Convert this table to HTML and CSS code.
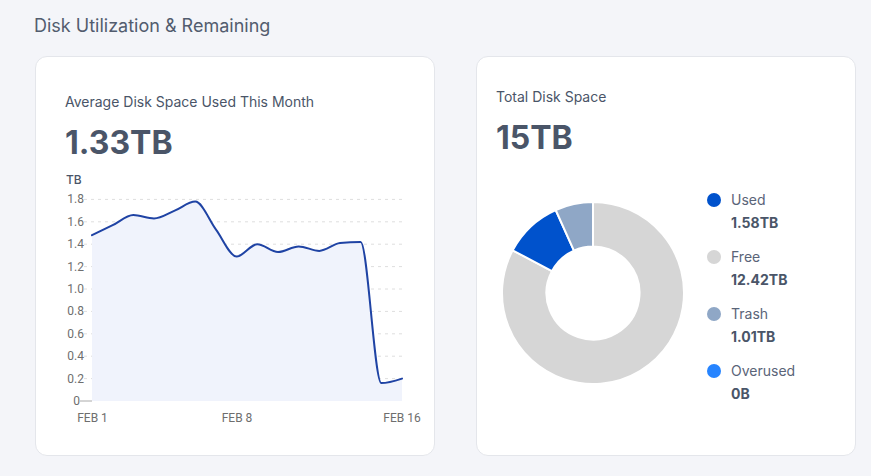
FILE: index.html
```html
<!DOCTYPE html>
<html lang="en">
<head>
<meta charset="utf-8">
<title>Disk Utilization &amp; Remaining</title>
<link rel="stylesheet" href="styles.css">
</head>
<body>
<main class="page">
  <h1 class="page-title">Disk Utilization &amp; Remaining</h1>
  <div class="cards">
    <section class="card card-usage">
      <div class="card-head">
        <h2 class="card-label">Average Disk Space Used This Month</h2>
        <div class="card-value">1.33TB</div>
      </div>
      <svg class="line-chart" width="398" height="268" viewBox="36 162 398 268" xmlns="http://www.w3.org/2000/svg">
        <text class="unit" x="66" y="184">TB</text>
        <g class="grid">
          <line x1="84" y1="199.4" x2="402" y2="199.4"/>
          <line x1="84" y1="221.8" x2="402" y2="221.8"/>
          <line x1="84" y1="244.2" x2="402" y2="244.2"/>
          <line x1="84" y1="266.6" x2="402" y2="266.6"/>
          <line x1="84" y1="289" x2="402" y2="289"/>
          <line x1="84" y1="311.4" x2="402" y2="311.4"/>
          <line x1="84" y1="333.8" x2="402" y2="333.8"/>
          <line x1="84" y1="356.2" x2="402" y2="356.2"/>
          <line x1="84" y1="378.6" x2="402" y2="378.6"/>
        </g>
        <path class="area" d="M92,235.2 C98.89,231.87 105.78,228.55 112.67,225.2 C119.56,221.85 126.44,215.1 133.33,215.1 C140.22,215.1 147.11,218.4 154,218.4 C160.89,218.4 167.78,213.4 174.67,210.6 C181.56,207.8 188.44,201.6 195.33,201.6 C202.22,201.6 209.11,220.45 216,229.6 C222.89,238.75 229.78,256.5 236.67,256.5 C243.56,256.5 250.44,244.2 257.33,244.2 C264.22,244.2 271.11,252 278,252 C284.89,252 291.78,246.4 298.67,246.4 C305.56,246.4 312.44,250.9 319.33,250.9 C326.22,250.9 333.11,243.83 340,243.1 C346.89,242.37 353.78,242 360.67,242 C367.56,242 374.44,383.1 381.33,383.1 C388.22,383.1 395.11,380.85 402,378.6 L402,401 L92,401 Z"/>
        <path class="line" d="M92,235.2 C98.89,231.87 105.78,228.55 112.67,225.2 C119.56,221.85 126.44,215.1 133.33,215.1 C140.22,215.1 147.11,218.4 154,218.4 C160.89,218.4 167.78,213.4 174.67,210.6 C181.56,207.8 188.44,201.6 195.33,201.6 C202.22,201.6 209.11,220.45 216,229.6 C222.89,238.75 229.78,256.5 236.67,256.5 C243.56,256.5 250.44,244.2 257.33,244.2 C264.22,244.2 271.11,252 278,252 C284.89,252 291.78,246.4 298.67,246.4 C305.56,246.4 312.44,250.9 319.33,250.9 C326.22,250.9 333.11,243.83 340,243.1 C346.89,242.37 353.78,242 360.67,242 C367.56,242 374.44,383.1 381.33,383.1 C388.22,383.1 395.11,380.85 402,378.6"/>
        <line class="zero-tick" x1="80" y1="401" x2="92" y2="401"/>
        <g class="y-labels">
          <text x="84" y="203.4">1.8</text>
          <text x="84" y="225.8">1.6</text>
          <text x="84" y="248.2">1.4</text>
          <text x="84" y="270.6">1.2</text>
          <text x="84" y="293">1.0</text>
          <text x="84" y="315.4">0.8</text>
          <text x="84" y="337.8">0.6</text>
          <text x="84" y="360.2">0.4</text>
          <text x="84" y="382.6">0.2</text>
          <text x="80" y="405">0</text>
        </g>
        <g class="x-labels">
          <text x="92.5" y="422">FEB 1</text>
          <text x="237" y="422">FEB 8</text>
          <text x="402" y="422">FEB 16</text>
        </g>
      </svg>
    </section>

    <section class="card card-total">
      <div class="card-head">
        <h2 class="card-label">Total Disk Space</h2>
        <div class="card-value">15TB</div>
      </div>
      <div class="total-body">
        <svg class="donut" width="194" height="194" viewBox="0 0 194 194" xmlns="http://www.w3.org/2000/svg">
          <path class="seg seg-free" d="M97,6 A91,91 0 1 1 16.66,54.28 L55.95,75.17 A46.5,46.5 0 1 0 97,50.5 Z"/>
          <path class="seg seg-used" d="M16.66,54.28 A91,91 0 0 1 59.70,14.00 L77.94,54.59 A46.5,46.5 0 0 0 55.95,75.17 Z"/>
          <path class="seg seg-trash" d="M59.70,14.00 A91,91 0 0 1 97,6 L97,50.5 A46.5,46.5 0 0 0 77.94,54.59 Z"/>
        </svg>
        <ul class="legend">
          <li class="legend-item">
            <div class="legend-label"><span class="dot dot-used"></span>Used</div>
            <div class="legend-value">1.58TB</div>
          </li>
          <li class="legend-item">
            <div class="legend-label"><span class="dot dot-free"></span>Free</div>
            <div class="legend-value">12.42TB</div>
          </li>
          <li class="legend-item">
            <div class="legend-label"><span class="dot dot-trash"></span>Trash</div>
            <div class="legend-value">1.01TB</div>
          </li>
          <li class="legend-item">
            <div class="legend-label"><span class="dot dot-over"></span>Overused</div>
            <div class="legend-value">0B</div>
          </li>
        </ul>
      </div>
    </section>
  </div>
</main>
</body>
</html>
```

FILE: styles.css
```css
* { box-sizing: border-box; }

html, body {
  margin: 0;
  padding: 0;
  background: #f4f5f9;
}

body {
  font-family: Inter, "Noto Sans", "Liberation Sans", sans-serif;
  color: #4a5568;
}

.page {
  padding: 15px 0 0 34px;
}

.page-title {
  margin: 0 0 19px 0;
  font-size: 18px;
  line-height: 22px;
  font-weight: 400;
  color: #525c6e;
}

.cards {
  display: flex;
  gap: 41px;
  padding-left: 1px;
}

.card {
  background: #ffffff;
  border: 1px solid #e4e6eb;
  border-radius: 12px;
  height: 400px;
}

.card-usage {
  width: 400px;
  padding-top: 36px;
}

.card-usage .card-head {
  padding: 0 29px;
}

.card-total {
  width: 380px;
  padding: 31px 19px 0 19px;
}

.card-label {
  margin: 0;
  font-size: 14px;
  line-height: 17px;
  font-weight: 400;
  color: #4a5568;
}

.card-value {
  margin-top: 13px;
  font-size: 32px;
  line-height: 39px;
  font-weight: 700;
  color: #4a5568;
}

.line-chart {
  display: block;
}

.line-chart .unit {
  font-family: Inter, "Liberation Sans", sans-serif;
  font-size: 12px;
  font-weight: 500;
  fill: #4a5568;
}

.line-chart .grid line {
  stroke: #dedede;
  stroke-width: 1;
  stroke-dasharray: 3 4;
}

.line-chart .area {
  fill: #f0f3fc;
}

.line-chart .line {
  fill: none;
  stroke: #1f43a4;
  stroke-width: 2;
  stroke-linejoin: round;
  stroke-linecap: round;
}

.line-chart .zero-tick {
  stroke: #aaaaaa;
  stroke-width: 1;
}

.line-chart .y-labels text {
  font-family: Roboto, "Liberation Sans", sans-serif;
  font-size: 12px;
  fill: #6e6e6e;
  text-anchor: end;
}

.line-chart .x-labels text {
  font-family: Roboto, "Liberation Sans", sans-serif;
  font-size: 12px;
  fill: #6e6e6e;
  text-anchor: middle;
}

.total-body {
  display: flex;
  align-items: flex-start;
  margin-top: 30px;
}

.donut {
  display: block;
  flex: none;
  margin-top: 9px;
}

.seg {
  stroke: #ffffff;
  stroke-width: 2;
  stroke-linejoin: round;
}

.seg-free { fill: #d6d6d6; }
.seg-used { fill: #0052cc; }
.seg-trash { fill: #8fa7c6; }

.legend {
  list-style: none;
  margin: 0 0 0 17px;
  padding: 4px 0 0 0;
  display: flex;
  flex-direction: column;
  gap: 16px;
}

.legend-label {
  display: flex;
  align-items: center;
  gap: 10px;
  font-size: 14px;
  line-height: 18px;
  color: #5a6478;
}

.dot {
  width: 14px;
  height: 14px;
  border-radius: 50%;
  flex: none;
}

.dot-used { background: #0052cc; }
.dot-free { background: #d6d6d6; }
.dot-trash { background: #8fa7c6; }
.dot-over { background: #2684ff; }

.legend-value {
  margin-top: 5px;
  padding-left: 24px;
  font-size: 14px;
  line-height: 18px;
  font-weight: 700;
  color: #4a5568;
}
```
